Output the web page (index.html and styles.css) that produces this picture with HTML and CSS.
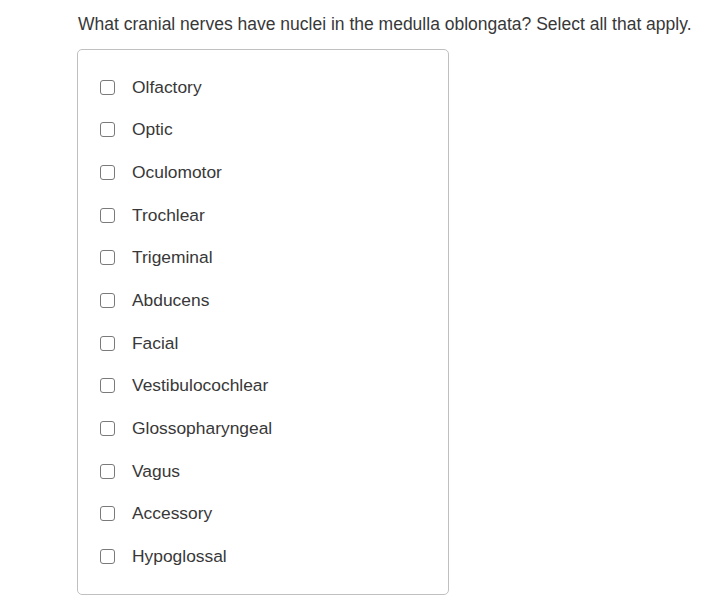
FILE: index.html
```html
<!DOCTYPE html>
<html>
<head>
<meta charset="utf-8">
<link rel="stylesheet" href="styles.css">
</head>
<body>
<div class="page">
  <p class="question">What cranial nerves have nuclei in the medulla oblongata? Select all that apply.</p>
  <div class="options">
    <label class="option"><span class="box"></span><span class="label">Olfactory</span></label>
    <label class="option"><span class="box"></span><span class="label">Optic</span></label>
    <label class="option"><span class="box"></span><span class="label">Oculomotor</span></label>
    <label class="option"><span class="box"></span><span class="label">Trochlear</span></label>
    <label class="option"><span class="box"></span><span class="label">Trigeminal</span></label>
    <label class="option"><span class="box"></span><span class="label">Abducens</span></label>
    <label class="option"><span class="box"></span><span class="label">Facial</span></label>
    <label class="option"><span class="box"></span><span class="label">Vestibulocochlear</span></label>
    <label class="option"><span class="box"></span><span class="label">Glossopharyngeal</span></label>
    <label class="option"><span class="box"></span><span class="label">Vagus</span></label>
    <label class="option"><span class="box"></span><span class="label">Accessory</span></label>
    <label class="option"><span class="box"></span><span class="label">Hypoglossal</span></label>
  </div>
</div>
</body>
</html>
```
FILE: styles.css
```css
html, body {
  margin: 0;
  padding: 0;
  background: #ffffff;
}
body {
  font-family: "Liberation Sans", Arial, sans-serif;
  color: #383838;
  font-size: 17.4px;
}
.page {
  padding: 15px 0 0 77px;
}
.question {
  margin: 0 0 15px 1px;
  line-height: 19px;
  font-size: 17.5px;
}
.options {
  width: 370px;
  border: 1px solid #c0c0c0;
  border-radius: 5px;
  padding: 16px 0 16px 0;
}
.option {
  display: flex;
  align-items: center;
  height: 42.67px;
  padding-left: 22px;
}
.box {
  border: 1px solid #7a7a7a;
  border-radius: 3px;
  box-sizing: border-box;
  width: 15px;
  height: 15px;
  flex: none;
}
.label {
  margin-left: 17px;
  line-height: 19px;
}
```
